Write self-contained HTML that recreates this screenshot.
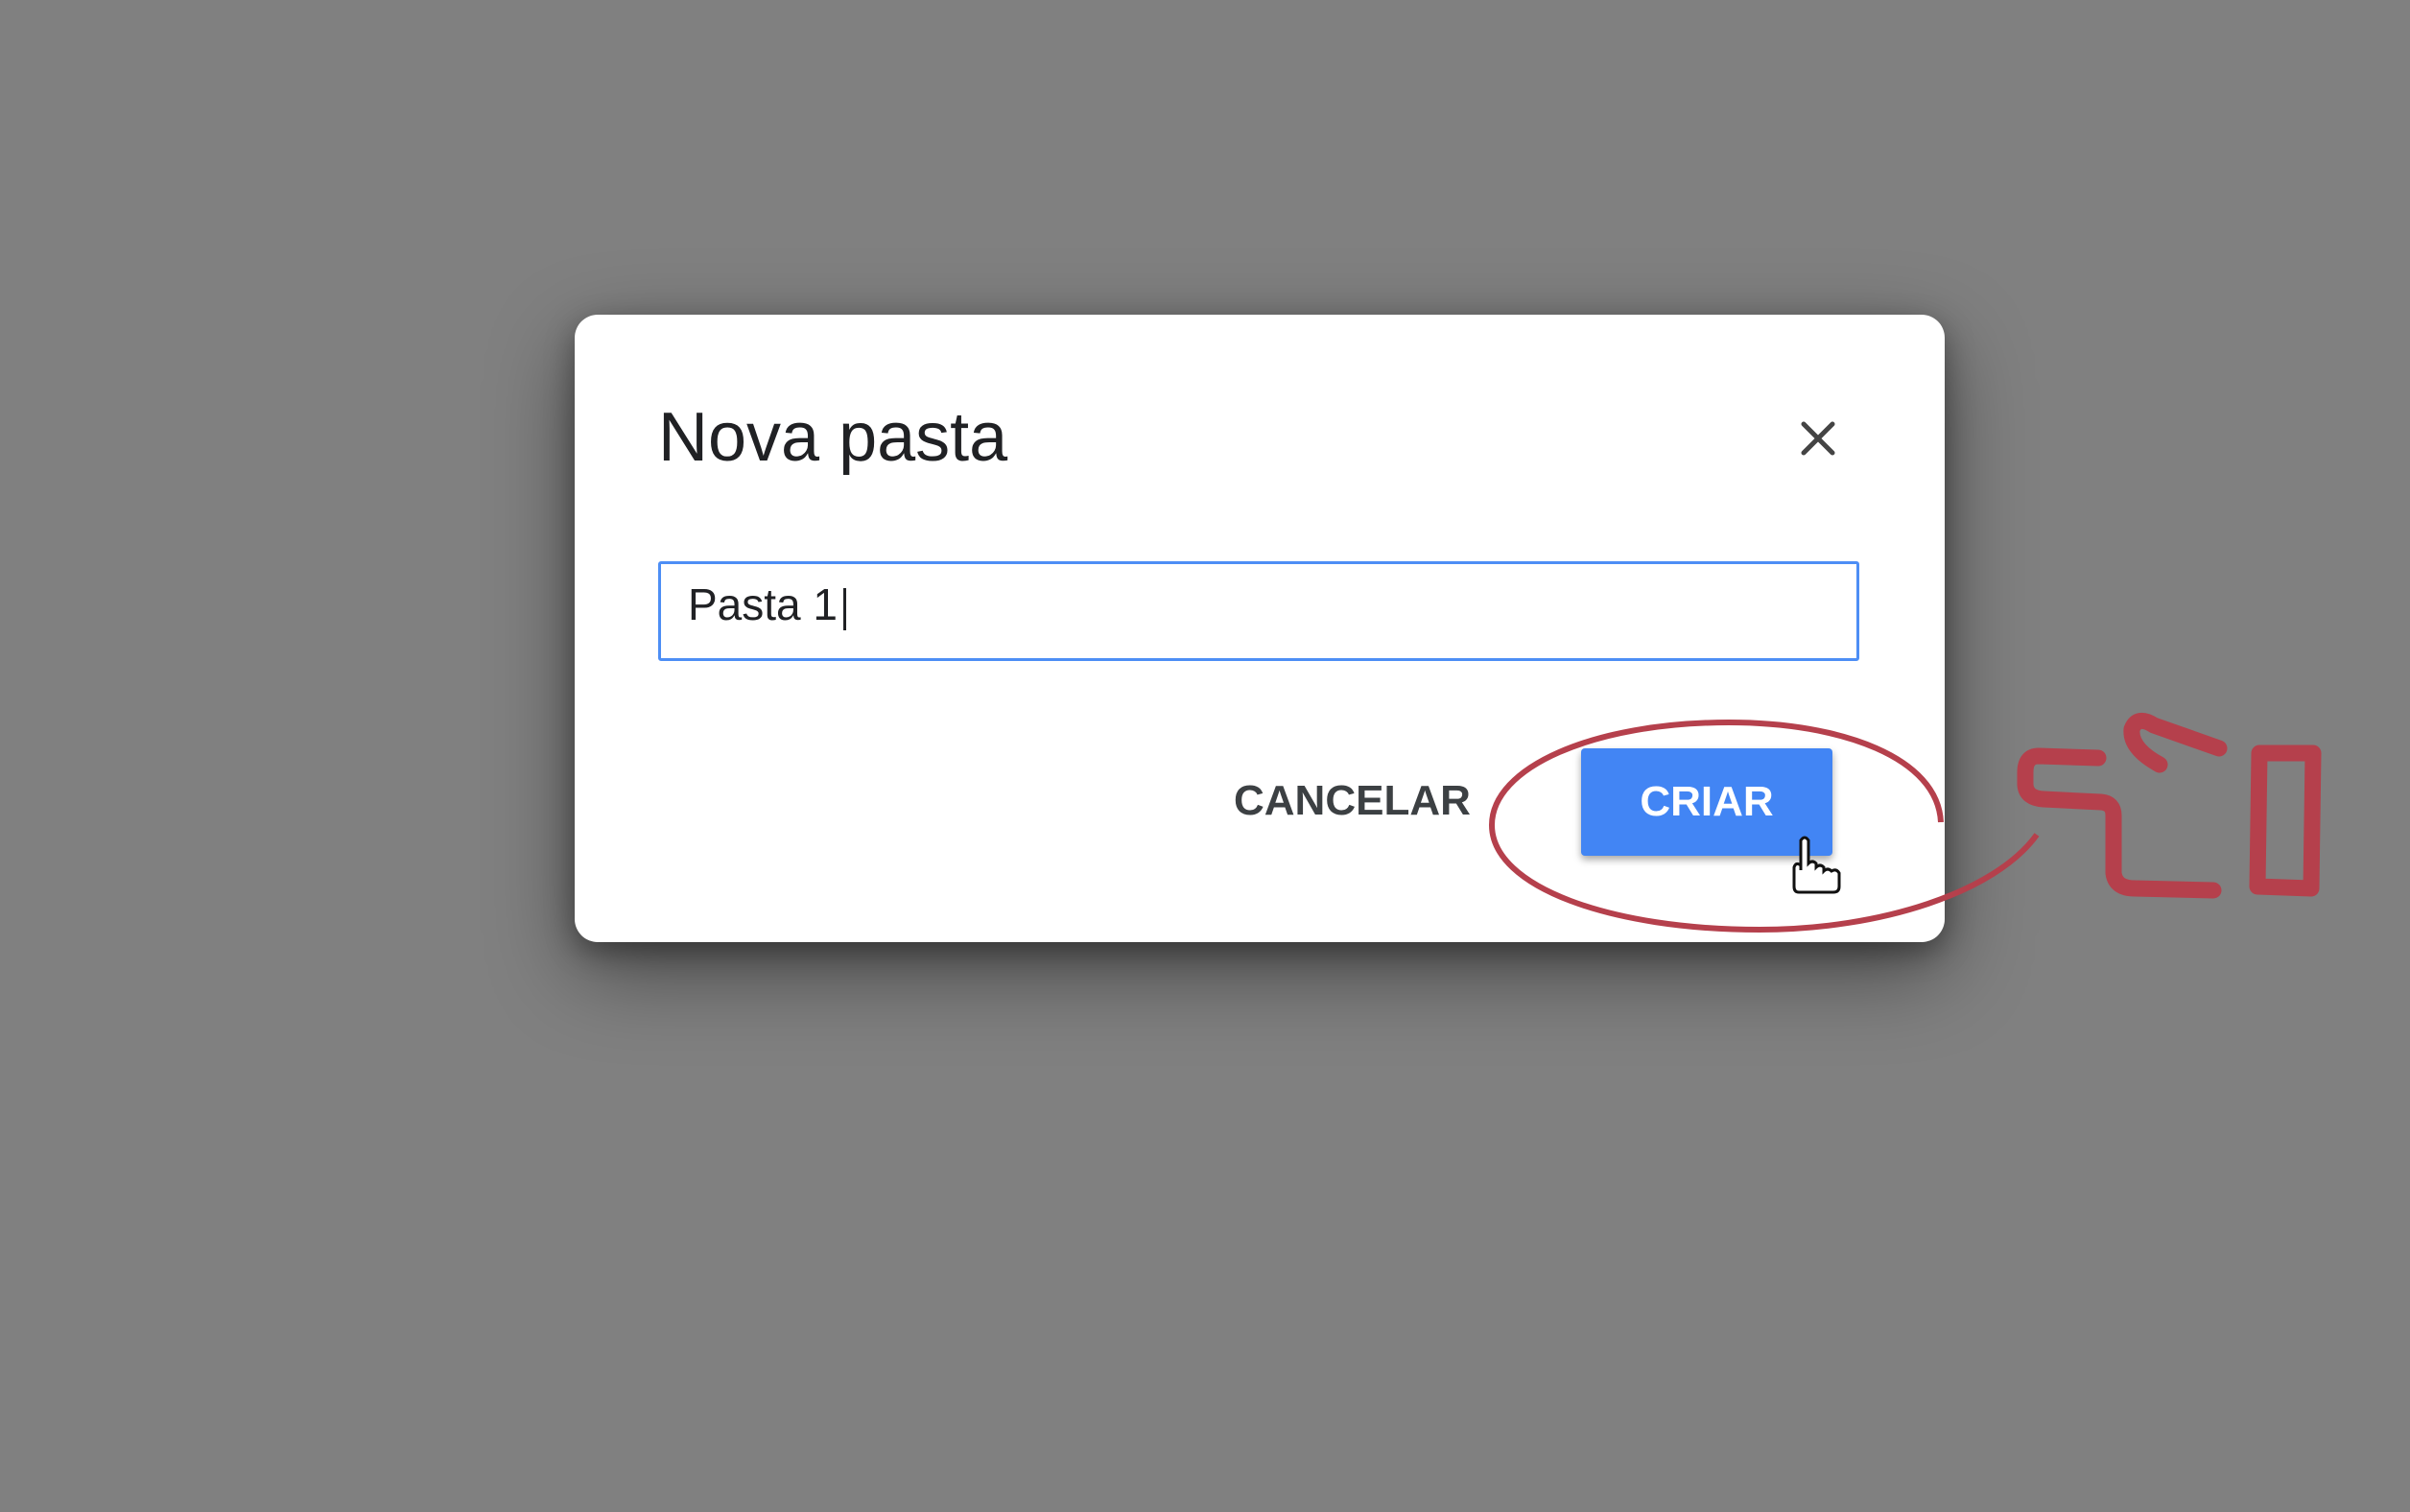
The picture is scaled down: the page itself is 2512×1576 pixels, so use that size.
<!DOCTYPE html>
<html><head><meta charset="utf-8"><style>
html,body{margin:0;padding:0;width:2512px;height:1576px;background:#808080;overflow:hidden;font-family:"Liberation Sans",sans-serif;}
.dlg{position:absolute;left:599px;top:328px;width:1428px;height:654px;background:#fff;border-radius:24px;box-shadow:0 30px 90px rgba(0,0,0,0.45),0 10px 30px rgba(0,0,0,0.35);}
.t{position:absolute;left:686px;top:414px;font-size:72px;line-height:84px;color:#202124;white-space:nowrap;}
.inp{position:absolute;left:686px;top:585px;width:1246px;height:98px;border:3px solid #4d8ef5;border-radius:3px;background:#fff;}
.it{position:absolute;left:717px;top:603px;font-size:46px;line-height:54px;color:#202124;}
.cur{position:absolute;left:879px;top:613px;width:3px;height:44px;background:#202124;}
.can{position:absolute;left:1286px;top:808px;font-size:44px;font-weight:bold;line-height:54px;color:#3c4043;}
.btn{position:absolute;left:1648px;top:780px;width:262px;height:112px;background:#4285f4;border-radius:4px;box-shadow:0 4px 8px rgba(0,0,0,0.35);color:#fff;font-size:44px;font-weight:bold;line-height:112px;text-align:center;}
svg{position:absolute;left:0;top:0;}
</style></head><body>
<div class="dlg"></div>
<div class="t">Nova pasta</div>
<div class="inp"></div>
<div class="it">Pasta 1</div>
<div class="cur"></div>
<div class="can">CANCELAR</div>
<div class="btn">CRIAR</div>
<svg width="2512" height="1576" viewBox="0 0 2512 1576">
<g stroke="#444" stroke-width="5" stroke-linecap="round"><line x1="1880" y1="442" x2="1910" y2="472"/><line x1="1910" y1="442" x2="1880" y2="472"/></g>
<path d="M1877 876 q4-6 8 0 v24 q4-4 8 0 v4 q4-4 8 0 v4 q4-4 8 0 q5-3 8 2 v14 q0 6-6 6 h-36 q-5 0-5-6 v-20 q2-6 7-2 v5 z" fill="#fff" stroke="#111" stroke-width="3"/>
<path d="M2023 857 C2020 790 1920 753 1802 753 C1660 753 1555 800 1555 860 C1555 925 1680 969 1834 969 C1960 969 2080 930 2123 870" fill="none" stroke="#b5404c" stroke-width="6"/>
<g fill="none" stroke="#b5404c" stroke-width="17" stroke-linejoin="round" stroke-linecap="round">
<path d="M2187 790 L2125 788 Q2111 788 2111 805 L2111 818 Q2112 832 2130 833 L2190 836 Q2203 837 2203 850 L2203 910 Q2205 926 2225 926 L2307 928"/>
<path d="M2251 797 Q2220 780 2222 760 Q2228 745 2245 756 L2313 780"/>
<path d="M2355 785 L2411 785 L2409 926 L2353 924 Z"/>
</g>
</svg>
</body></html>
